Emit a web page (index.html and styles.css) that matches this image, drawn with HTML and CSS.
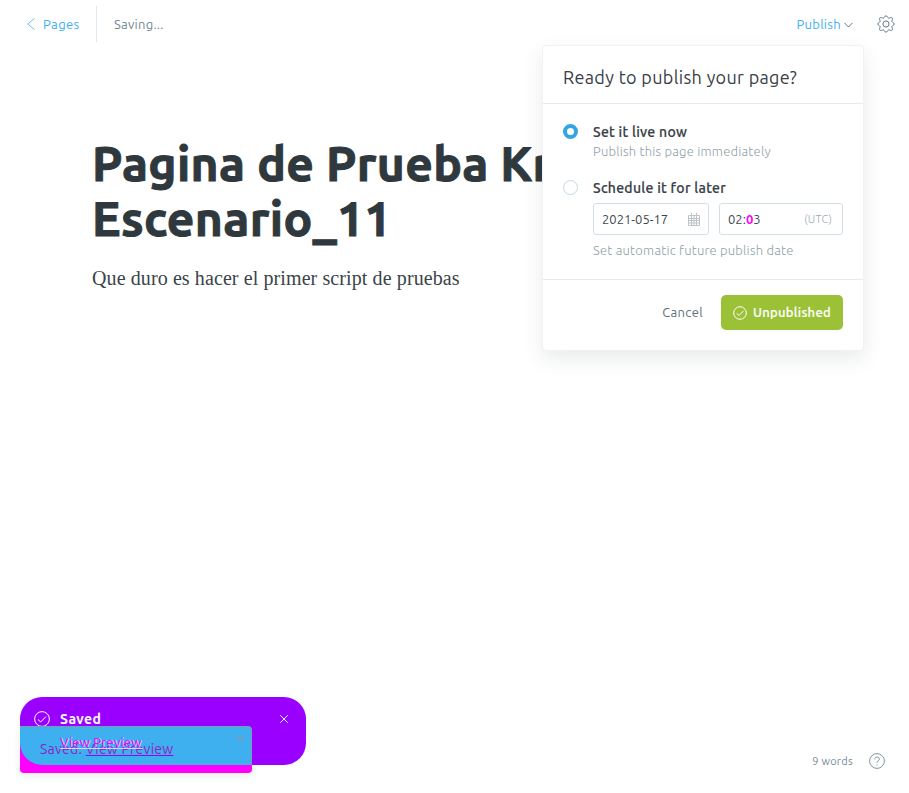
FILE: index.html
```html
<!DOCTYPE html>
<html lang="en">
<head>
<meta charset="utf-8">
<title>Editor</title>
<link rel="stylesheet" href="styles.css">
</head>
<body>
<div class="app">
  <header class="bar">
    <a class="back"><svg width="8" height="12" viewBox="0 0 8 12"><path d="M7.500.5.700 6l6.800 5.500"/></svg><span>Pages</span></a>
    <span class="status">Saving...</span>
    <div class="actions">
      <a class="publish"><span>Publish</span><svg width="9" height="6" viewBox="0 0 9 6"><path d="M.5.800 4.500 5 8.500.8"/></svg></a>
      <svg class="gear" width="18" height="18" viewBox="0 0 18 18"><circle cx="9" cy="9" r="3.100"/><path d="M7.300 2.400Q9-.9 10.700 2.400q.5 1 1.700.6c3-1 3.600-.4 2.600 2.600q-.4 1.200.6 1.700 3.300 1.700 0 3.400-1 .5-.6 1.700c1 3 .4 3.600-2.600 2.600q-1.200-.4-1.700.6-1.700 3.300-3.400 0-.5-1-1.700-.6c-3 1-3.600.4-2.600-2.600q.4-1.200-.6-1.700-3.300-1.700 0-3.400 1-.5.600-1.700c-1-3-.4-3.600 2.600-2.600q1.200.4 1.700-.6z"/></svg>
    </div>
  </header>
  <main class="doc">
    <h1><span class="line">Pagina de Prueba Kraken</span><span class="line">Escenario_11</span></h1>
    <p>Que duro es hacer el primer script de pruebas</p>
  </main>
  <section class="menu">
    <h2><span>Ready to publish your page?</span></h2>
    <div class="options">
      <div class="option"><i class="radio on"></i><div class="body"><b>Set it live now</b><span class="hint">Publish this page immediately</span></div></div>
      <div class="option later"><i class="radio"></i><div class="body"><b>Schedule it for later</b>
        <div class="fields">
          <div class="field date"><span>2021-05-17</span><svg width="12" height="13" viewBox="0 0 12 13"><path d="M.5 2.500h11v10H.5zM.5 5.500h11M.5 7.500h11M.5 10h11M3.500 2.500v10M6 2.500v10M8.500 2.500v10M3.500 0v3M8.500 0v3"/></svg></div>
          <div class="field time"><span>02:<em>0</em>3</span><small>(UTC)</small></div>
        </div>
        <span class="hint">Set automatic future publish date</span></div></div>
    </div>
    <footer><span class="cancel">Cancel</span><button><svg width="14" height="14" viewBox="0 0 14 14"><circle cx="7" cy="7" r="6.300"/><path d="M3.700 7.300 6 9.500l4.500-4.600"/></svg><span>Unpublished</span></button></footer>
  </section>
  <div class="under"></div>
  <div class="toast">
    <svg class="check" width="16" height="16" viewBox="0 0 16 16"><circle cx="8" cy="8" r="7.400"/><path d="M4 8.500 6.700 11 12 5.500"/></svg>
    <b>Saved</b>
    <svg class="close" width="8" height="8" viewBox="0 0 8 8"><path d="M.3.300l7.400 7.400M7.700.300.3 7.700"/></svg>
    <div class="blend">
      <span class="old">Saved. <u>View Preview</u></span>
      <span class="new">View Preview</span>
      <svg class="close2" width="7" height="7" viewBox="0 0 7 7"><path d="M.3.300l6.400 6.400M6.700.300.3 6.700"/></svg>
    </div>
  </div>
  <div class="foot"><span>9 words</span><svg width="16" height="16" viewBox="0 0 16 16"><circle cx="8" cy="8" r="7.400"/><path d="M5.700 6.300c0-3 4.700-3 4.700-.2C10.400 8 8 7.700 8 9.800M8 11.500v1"/></svg></div>
</div>
</body>
</html>
```
FILE: styles.css
```css
* { box-sizing: border-box; }
body { margin: 0; background: #fff; font: 13px/20px "Ubuntu", "Noto Sans", "Open Sans", sans-serif; letter-spacing: .25px; color: #394047; }
svg { display: block; flex: none; fill: none; stroke: currentColor; stroke-width: 1; }
span, b, small { white-space: nowrap; }
.app { position: relative; width: 909px; height: 793px; overflow: hidden; }
.bar { display: flex; align-items: center; height: 48px; padding: 0 14px 0 27px; }
.back { display: flex; align-items: center; gap: 8px; height: 36px; width: 70px; color: #3eb0ef; border-right: 1px solid #dfe9f1; letter-spacing: .4px; }
.back svg { stroke-width: .8; }
.status { margin-left: 17px; color: #738a94; }
.actions { display: flex; align-items: center; gap: 24px; margin-left: auto; }
.publish { display: flex; align-items: center; gap: 3px; color: #3eb0ef; letter-spacing: .3px; }
.publish svg, .gear { color: #607985; }
.publish svg { margin-top: 2px; }
.doc { padding: 88px 0 0 92px; }
h1 { margin: 0; font-size: 48px; line-height: 55px; font-weight: 700; letter-spacing: .34px; color: #2e383d; -webkit-text-stroke: 1px #2e383d; }
.line { display: block; }
.doc p { margin: 20px 0 0; font: 20px/24px "Liberation Serif", serif; letter-spacing: .1px; color: #3a4449; }
.menu { position: absolute; left: 542px; top: 45px; width: 322px; height: 306px; background: #fff; border: 1px solid #f0f2f3; border-radius: 4px; box-shadow: 0 8px 20px rgba(40,55,65,.1); }
h2 { margin: 0; height: 58px; padding: 18px 20px 0; border-bottom: 1px solid #e3ecf3; font-size: 18px; line-height: 26px; font-weight: 400; letter-spacing: .33px; }
.options { height: 176px; padding: 18px 20px 0; border-bottom: 1px solid #e3ecf3; }
.option { display: flex; gap: 15px; }
.later { margin-top: 17px; }
.radio { width: 15px; height: 15px; margin-top: 2px; border: 1px solid #c3d8e5; border-radius: 50%; }
.radio.on { border: 4px solid #35a4e4; }
.body { width: 250px; }
.body b { display: block; width: max-content; height: 19px; font-size: 14px; font-weight: 500; letter-spacing: .28px; -webkit-text-stroke: .2px #394047; }
.hint { display: block; width: max-content; font-weight: 300; letter-spacing: .22px; color: #8e9fa8; }
.fields { display: flex; gap: 10px; margin: 6px 0 5px; }
.field { display: flex; justify-content: space-between; align-items: center; height: 32px; padding: 0 8px; border: 1px solid #d3dfe6; border-radius: 3px; color: #3c484e; letter-spacing: 0; }
.date { width: 116px; } .time { width: 124px; padding-right: 10px; }
.field svg { color: #bcc4c8; }
.field small { font-size: 11px; font-weight: 300; letter-spacing: .2px; color: #9aabb4; }
.field em { font-style: normal; color: #f0f; font-weight: 700; }
footer { display: flex; justify-content: flex-end; align-items: center; gap: 18px; padding: 15px 20px; }
.cancel { margin-top: -2px; color: #5d7079; letter-spacing: .35px; }
button { display: flex; align-items: center; gap: 6px; width: 122px; height: 35px; padding: 0 12px; border: 0; border-radius: 5px; background: #9bc137; color: #fff; font: inherit; font-weight: 500; letter-spacing: .3px; }
button span { margin-top: -2px; -webkit-text-stroke: .2px #fff; }
.under { position: absolute; left: 20px; top: 726px; width: 232px; height: 47px; border-radius: 4px; background: #f0f; box-shadow: 0 3px 8px rgba(0,0,0,.08); }
.toast { position: absolute; left: 20px; top: 697px; width: 286px; height: 68px; padding: 12px 18px 0 14px; border-radius: 22px; overflow: hidden; display: flex; align-items: flex-start; background: #90f; color: #fff; }
.check { margin-top: 2px; } .toast b { margin-left: 10px; font-size: 14px; letter-spacing: .4px; } .close { margin: 6px 0 0 auto; }
.blend { position: absolute; left: 0; top: 29px; width: 232px; height: 39px; background: #3eb0ef; border-top: 1px solid #7b9bb0; border-right: 1px solid #7b9bb0; border-top-right-radius: 4px; }
.old, .new, .close2 { position: absolute; }
.old { left: 20px; top: 12px; font-size: 14px; color: #8a26c4; }
.old u { text-decoration-color: #90f; }
.new { left: 40px; top: 5px; color: #f0f; text-decoration: underline; text-decoration-color: #d9d3ff; text-shadow: 1px 0 #b9dcff; }
.close2 { right: 7px; top: 8px; color: #a8908e; }
.foot { position: absolute; right: 24px; bottom: 24px; display: flex; align-items: center; gap: 16px; height: 16px; font-size: 11px; color: #738a94; }
.foot svg { stroke-width: .9; }
```
